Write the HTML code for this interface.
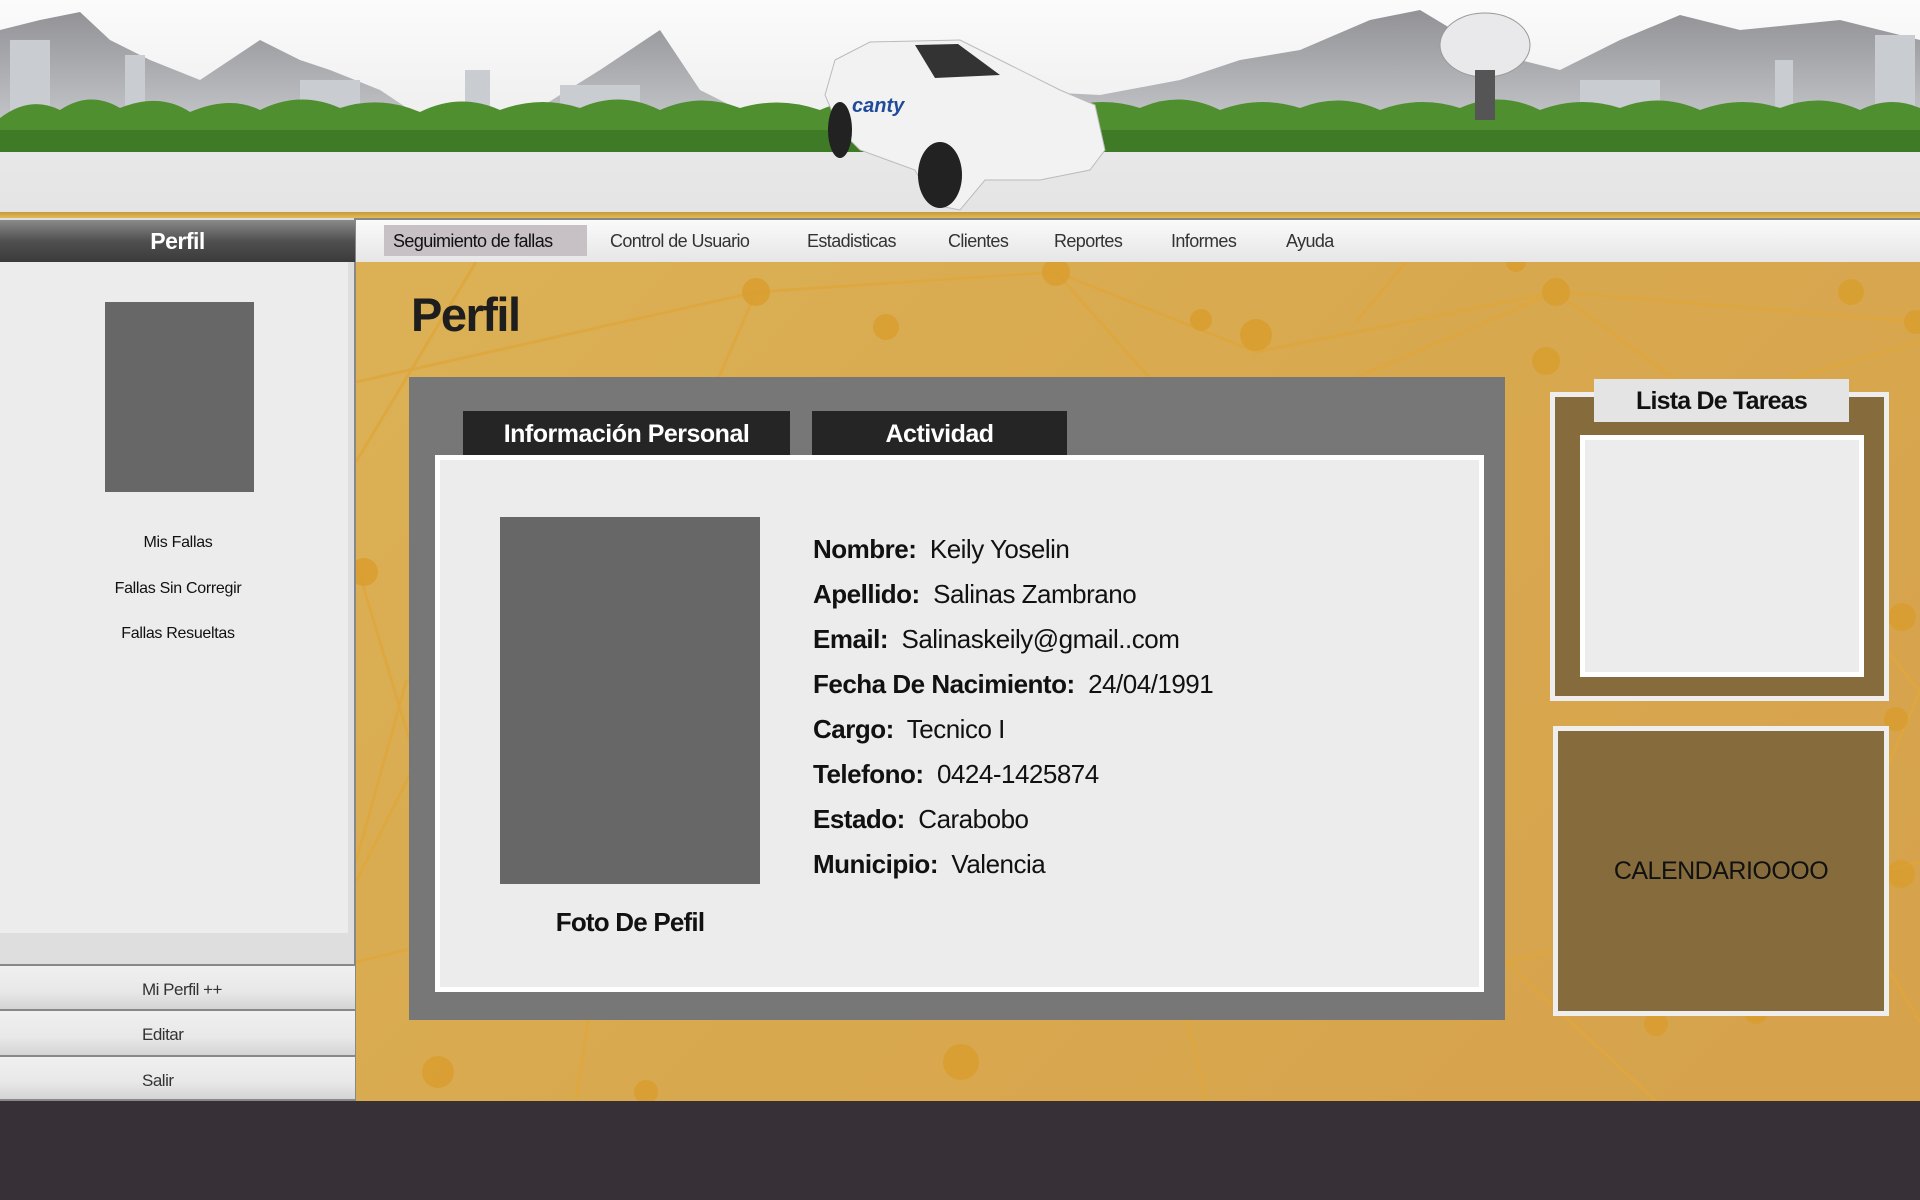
<!DOCTYPE html>
<html><head><meta charset="utf-8"><style>
*{margin:0;padding:0;box-sizing:border-box}
body{width:1920px;height:1200px;overflow:hidden;background:#373037;font-family:"Liberation Sans",sans-serif;position:relative}
.a{position:absolute}
</style></head><body>
<!-- header -->
<div class="a" style="left:0;top:0;width:1920px;height:214px;background:linear-gradient(#fbfbfb,#f0f0f0 50%,#e8e8e8 70%,#e4e4e4)"></div>
<svg class="a" style="left:0;top:0" width="1920" height="214">
<defs><linearGradient id="m" x1="0" y1="0" x2="0" y2="1"><stop offset="0" stop-color="#6f6f75"/><stop offset="1" stop-color="#b9bcc0"/></linearGradient></defs>
<path d="M0 30 L40 20 L80 12 L110 40 L150 60 L200 80 L260 40 L300 60 L330 70 L380 90 L440 130 L520 120 L600 70 L660 30 L700 90 L740 110 L800 120 L900 100 L1000 90 L1100 95 L1180 80 L1240 60 L1300 50 L1370 20 L1420 10 L1470 40 L1520 60 L1560 70 L1620 40 L1680 15 L1740 30 L1790 25 L1840 20 L1920 40 L1920 130 L0 130Z" fill="url(#m)" opacity=".75"/>
<g fill="#c9ccd0"><rect x="10" y="40" width="40" height="90"/><rect x="125" y="55" width="20" height="75"/><rect x="465" y="70" width="25" height="60"/><rect x="1775" y="60" width="18" height="70"/><rect x="1875" y="35" width="40" height="95"/><rect x="300" y="80" width="60" height="50"/><rect x="560" y="85" width="80" height="45"/><rect x="1580" y="80" width="80" height="50"/></g>
<path d="M0 118 Q30 95 60 110 Q90 90 120 108 Q160 92 190 112 Q230 95 260 110 Q300 90 340 108 Q380 95 420 112 Q460 92 500 110 Q540 95 580 108 Q620 90 660 110 Q700 92 740 108 Q780 96 820 110 Q860 92 900 108 Q940 95 980 112 Q1020 92 1060 110 Q1100 95 1140 108 Q1180 90 1220 110 Q1260 95 1300 108 Q1340 92 1380 110 Q1420 95 1460 108 Q1500 90 1540 110 Q1580 95 1620 108 Q1660 92 1700 110 Q1740 95 1780 108 Q1820 92 1860 110 Q1890 95 1920 108 L1920 152 L0 152Z" fill="#4f8f2f"/>
<rect x="0" y="130" width="1920" height="22" fill="#3f7a26"/>
<path d="M835 60 L870 42 L960 40 L1010 65 L1060 90 L1095 105 L1105 150 L1090 170 L1040 180 L985 180 L960 210 L935 205 L915 170 L860 150 L840 130 L825 95Z" fill="#f2f2f2" stroke="#bbb"/>
<path d="M915 45 L958 44 L1000 75 L935 78Z" fill="#333"/>
<ellipse cx="940" cy="175" rx="22" ry="33" fill="#222"/><ellipse cx="840" cy="130" rx="12" ry="28" fill="#222"/>
<text x="852" y="112" font-family="Liberation Sans" font-style="italic" font-weight="bold" font-size="20" fill="#1f4b9a">canty</text>
<ellipse cx="1485" cy="45" rx="45" ry="32" fill="#e9e9ec" stroke="#999"/>
<rect x="1475" y="70" width="20" height="50" fill="#555"/>
</svg>
<div class="a" style="left:0;top:212px;width:1920px;height:6px;background:linear-gradient(#c59a3d,#e3bc55)"></div>
<div class="a" style="left:356px;top:218px;width:1564px;height:44px;background:linear-gradient(#fafafa,#e6e6e6);border-top:2px solid #888"></div>
<div class="a" style="left:384px;top:225px;width:203px;height:31px;background:#c7c0c5"></div>
<div class="a" style="top:231px;font-size:18px;color:#333;letter-spacing:-.6px;white-space:nowrap">
<span class="a" style="left:393px;color:#111">Seguimiento de fallas</span>
<span class="a" style="left:610px">Control de Usuario</span>
<span class="a" style="left:807px">Estadisticas</span>
<span class="a" style="left:948px">Clientes</span>
<span class="a" style="left:1054px">Reportes</span>
<span class="a" style="left:1171px">Informes</span>
<span class="a" style="left:1286px">Ayuda</span>
</div>
<div class="a" style="left:356px;top:262px;width:1564px;height:839px;background:linear-gradient(135deg,#dcb155,#d8a84e 50%,#d6a24c)"></div>
<svg class="a" style="left:356px;top:262px" width="1564" height="839">
<g stroke="#e0a63a" stroke-width="3" opacity=".7" fill="none">
<path d="M0 120 L400 30 L700 10 L900 90 L1200 30 L1564 60"/><path d="M400 30 L300 260 L50 420 L0 600"/><path d="M700 10 L850 180 L1200 30 L1350 140 L1564 80"/>
<path d="M0 700 L250 640 L500 720 L800 620 L1150 700 L1564 600"/><path d="M250 640 L220 839"/><path d="M800 620 L850 839"/><path d="M1150 700 L1300 839"/><path d="M0 300 L60 500 L0 620"/><path d="M1460 300 L1564 430 L1480 620 L1564 760"/><path d="M120 0 L0 200"/><path d="M1050 0 L1000 60"/>
</g>
<g fill="#d99e2f" opacity=".85"><circle cx="400" cy="30" r="14"/><circle cx="530" cy="65" r="13"/><circle cx="700" cy="10" r="14"/><circle cx="845" cy="58" r="11"/><circle cx="900" cy="73" r="16"/><circle cx="1200" cy="30" r="14"/><circle cx="1495" cy="30" r="13"/><circle cx="1560" cy="60" r="12"/><circle cx="1160" cy="0" r="10"/><circle cx="1190" cy="99" r="14"/><circle cx="1510" cy="268" r="12"/><circle cx="1546" cy="355" r="14"/><circle cx="1545" cy="612" r="14"/><circle cx="1540" cy="457" r="12"/><circle cx="82" cy="810" r="16"/><circle cx="290" cy="830" r="12"/><circle cx="605" cy="800" r="18"/><circle cx="1300" cy="762" r="12"/><circle cx="8" cy="310" r="14"/><circle cx="1400" cy="750" r="12"/></g>
</svg>
<div class="a" style="left:0;top:218px;width:356px;height:883px;background:#dedede;border-right:2px solid #888"></div>
<div class="a" style="left:0;top:220px;width:355px;height:42px;background:linear-gradient(#8a8a8a,#505050 50%,#3a3a3a);color:#fff;font-weight:bold;font-size:23px;text-align:center;line-height:42px;letter-spacing:-.5px">Perfil</div>
<div class="a" style="left:0;top:262px;width:348px;height:671px;background:#ececec"></div>
<div class="a" style="left:105px;top:302px;width:149px;height:190px;background:#676767"></div>
<div class="a" style="left:0;width:356px;text-align:center;font-size:16px;color:#111;top:534px;letter-spacing:-.3px">Mis Fallas</div>
<div class="a" style="left:0;width:356px;text-align:center;font-size:16px;color:#111;top:580px;letter-spacing:-.3px">Fallas Sin Corregir</div>
<div class="a" style="left:0;width:356px;text-align:center;font-size:16px;color:#111;top:625px;letter-spacing:-.3px">Fallas Resueltas</div>
<div class="a" style="left:0;top:964px;width:355px;height:137px">
<div style="height:45px;border-top:2px solid #888;background:linear-gradient(#f0f0f0,#e8e8e8 60%,#d4d4d4);font-size:17px;color:#333;padding-left:142px;line-height:48px;letter-spacing:-.5px">Mi Perfil ++</div>
<div style="height:46px;border-top:2px solid #888;background:linear-gradient(#f0f0f0,#e8e8e8 60%,#d4d4d4);font-size:17px;color:#333;padding-left:142px;line-height:48px;letter-spacing:-.5px">Editar</div>
<div style="height:46px;border-top:2px solid #888;border-bottom:2px solid #888;background:linear-gradient(#f0f0f0,#e8e8e8 60%,#d4d4d4);font-size:17px;color:#333;padding-left:142px;line-height:48px;letter-spacing:-.5px">Salir</div>
</div>
<div class="a" style="left:411px;top:287px;font-size:47px;font-weight:bold;color:#1e1e1e;letter-spacing:-1.5px">Perfil</div>
<div class="a" style="left:409px;top:377px;width:1096px;height:643px;background:#777"></div>
<div class="a" style="left:463px;top:411px;width:327px;height:44px;background:#252525;color:#fff;font-weight:bold;font-size:25px;text-align:center;line-height:46px;letter-spacing:-.5px">Información Personal</div>
<div class="a" style="left:812px;top:411px;width:255px;height:44px;background:#252525;color:#fff;font-weight:bold;font-size:25px;text-align:center;line-height:46px;letter-spacing:-.5px">Actividad</div>
<div class="a" style="left:435px;top:455px;width:1049px;height:537px;background:#ececec;border:5px solid #fff"></div>
<div class="a" style="left:500px;top:517px;width:260px;height:367px;background:#676767"></div>
<div class="a" style="left:500px;width:260px;text-align:center;top:907px;font-size:26px;font-weight:bold;color:#111;letter-spacing:-.8px">Foto De Pefil</div>
<div class="a" style="left:813px;top:527px;font-size:26px;color:#111;line-height:45px;letter-spacing:-.5px;white-space:nowrap">
<div><b>Nombre:</b>&nbsp; Keily Yoselin</div>
<div><b>Apellido:</b>&nbsp; Salinas Zambrano</div>
<div><b>Email:</b>&nbsp; Salinaskeily@gmail..com</div>
<div><b>Fecha De Nacimiento:</b>&nbsp; 24/04/1991</div>
<div><b>Cargo:</b>&nbsp; Tecnico I</div>
<div><b>Telefono:</b>&nbsp; 0424-1425874</div>
<div><b>Estado:</b>&nbsp; Carabobo</div>
<div><b>Municipio:</b>&nbsp; Valencia</div>
</div>
<div class="a" style="left:1550px;top:392px;width:339px;height:309px;background:#866c3c;border:5px solid #eee"></div>
<div class="a" style="left:1580px;top:435px;width:284px;height:242px;background:#ececec;border:5px solid #fff"></div>
<div class="a" style="left:1594px;top:379px;width:255px;height:43px;background:#e4e4e4;text-align:center;font-weight:bold;font-size:25px;line-height:44px;color:#111;letter-spacing:-.8px">Lista De Tareas</div>
<div class="a" style="left:1553px;top:726px;width:336px;height:290px;background:#866c3c;border:5px solid #eee;text-align:center;line-height:280px;font-size:25px;color:#111;letter-spacing:-.5px">CALENDARIOOOO</div>
</body></html>
